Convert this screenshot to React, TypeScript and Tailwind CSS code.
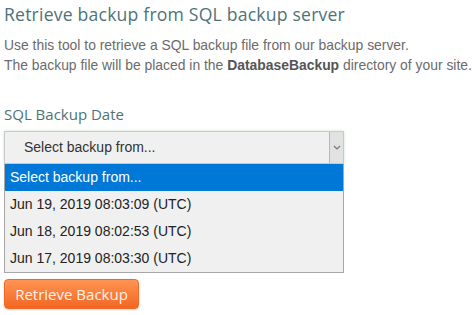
export default function App() {
  const dates = [
    "Jun 19, 2019 08:03:09 (UTC)",
    "Jun 18, 2019 08:02:53 (UTC)",
    "Jun 17, 2019 08:03:30 (UTC)",
  ];

  return (
    <div className="w-[474px] h-[315px] bg-white px-[4px] overflow-hidden">
      <h1 className="font-['Open_Sans',sans-serif] text-[17.6px] leading-[26px] text-[#4d7377] tracking-[0.2px] pt-[1px]">
        Retrieve backup from SQL backup server
      </h1>

      <div className="mt-[8px] font-['Liberation_Sans',Arial,sans-serif] text-[13.9px] leading-[20px] text-[#6b6b6b] whitespace-nowrap">
        <p>Use this tool to retrieve a SQL backup file from our backup server.</p>
        <p>
          The backup file will be placed in the{" "}
          <b className="text-[#555]">DatabaseBackup</b> directory of your site.
        </p>
      </div>

      <label className="block mt-[29px] font-['Open_Sans',sans-serif] text-[15px] leading-[20px] text-[#4d7377]">
        SQL Backup Date
      </label>

      <div className="mt-[7px] w-[340px]">
        <div className="h-[33px] flex items-stretch border border-[#c9c9c9] bg-[#f0f0f0] shadow-[0_0_3px_#cfe8cf]">
          <div className="flex-1 flex items-center pl-[19px] font-['Liberation_Sans',Arial,sans-serif] text-[14px] text-[#333]">
            Select backup from...
          </div>
          <div className="w-[14px] flex items-center justify-center border-l border-[#b8b8b8] bg-[#e2e2e2]">
            <svg width="8" height="5" viewBox="0 0 8 5">
              <path d="M1 1l3 3 3-3" fill="none" stroke="#777" strokeWidth="1.2" />
            </svg>
          </div>
        </div>

        <ul className="border border-[#a8a8a8] border-t-0 bg-[#f0f0f0] font-['Liberation_Sans',Arial,sans-serif] text-[14px] text-[#222]">
          <li className="h-[27px] flex items-center pl-[5px] bg-[#0078d7] text-white">
            Select backup from...
          </li>
          {dates.map((d) => (
            <li key={d} className="h-[27px] flex items-center pl-[5px]">
              {d}
            </li>
          ))}
        </ul>
      </div>

      <button className="mt-[6px] h-[30px] w-[135px] rounded-[4px] bg-gradient-to-b from-[#ff9452] to-[#f26620] border border-[#ee6a26] font-['Open_Sans',sans-serif] text-[15px] text-[#fff3ea] shadow-[0_1px_2px_rgba(0,0,0,0.15)]">
        Retrieve Backup
      </button>
    </div>
  );
}
